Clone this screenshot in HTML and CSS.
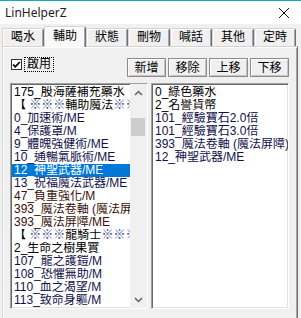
FILE: index.html
```html
<!DOCTYPE html>
<html lang="zh-Hant">
<head>
    <meta charset="UTF-8">
    <meta name="viewport" content="width=device-width, initial-scale=1.0">
    <title>LinHelperZ</title>
    <link rel="stylesheet" href="styles.css">
</head>
<body>
<div class="titlebar">
    <span class="title">LinHelperZ</span>
    <svg class="close" width="10" height="10" viewBox="0 0 10 10">
        <path d="M0 0L10 10M10 0L0 10" stroke="#111" stroke-width="1"/>
    </svg>
</div>

<div class="tabs">
    <div class="tab">喝水</div>
    <div class="tab active">輔助</div>
    <div class="tab">狀態</div>
    <div class="tab">刪物</div>
    <div class="tab">喊話</div>
    <div class="tab">其他</div>
    <div class="tab">定時</div>
</div>

<div class="panel">
    <div class="toprow">
        <div class="check">
            <svg width="11" height="11" viewBox="0 0 11 11">
                <rect x="0.5" y="0.5" width="10" height="10" fill="#fff" stroke="#333"/>
                <polyline points="2,5.5 4.3,7.8 8.8,3" fill="none" stroke="#000" stroke-width="1.7"/>
            </svg>
            <span class="checklabel">啟用</span>
        </div>
        <div class="buttons">
            <button class="btn">新增</button>
            <button class="btn">移除</button>
            <button class="btn">上移</button>
            <button class="btn">下移</button>
        </div>
    </div>

    <div class="lists">
        <div class="list">
            <div class="items">
                <div class="item">175_殷海薩補充藥水</div>
                <div class="item">【 <span class="mark">※※※</span>輔助魔法<span class="mark">※※※</span></div>
                <div class="item navy">0_加速術/ME</div>
                <div class="item navy">4_保護罩/M</div>
                <div class="item navy">9_體魄強健術/ME</div>
                <div class="item navy">10_通暢氣脈術/ME</div>
                <div class="item sel">12_神聖武器/ME</div>
                <div class="item navy">13_祝福魔法武器/ME</div>
                <div class="item brown">47_負重強化/M</div>
                <div class="item brown">393_魔法卷軸 (魔法屏障)/ME</div>
                <div class="item brown">393_魔法屏障/ME</div>
                <div class="item">【 <span class="mark">※※※</span>龍騎士<span class="mark">※※※</span></div>
                <div class="item">2_生命之樹果實</div>
                <div class="item navy">107_龍之護鎧/M</div>
                <div class="item navy">108_恐懼無助/M</div>
                <div class="item navy">110_血之渴望/M</div>
                <div class="item navy">113_致命身軀/M</div>
            </div>
            <div class="scroll">
                <div class="arrow">
                    <svg width="9" height="6" viewBox="0 0 9 6"><polyline points="1,5 4.5,1.5 8,5" fill="none" stroke="#606060" stroke-width="1.5"/></svg>
                </div>
                <div class="track"><div class="thumb"></div></div>
                <div class="arrow">
                    <svg width="9" height="6" viewBox="0 0 9 6"><polyline points="1,1 4.5,4.5 8,1" fill="none" stroke="#606060" stroke-width="1.5"/></svg>
                </div>
            </div>
        </div>

        <div class="list">
            <div class="items">
                <div class="item">0_綠色藥水</div>
                <div class="item">2_名譽貨幣</div>
                <div class="item navy">101_經驗寶石2.0倍</div>
                <div class="item navy">101_經驗寶石3.0倍</div>
                <div class="item navy">393_魔法卷軸 (魔法屏障),</div>
                <div class="item navy">12_神聖武器/ME</div>
            </div>
        </div>
    </div>
</div>
</body>
</html>
```

FILE: styles.css
```css
* {
    box-sizing: border-box;
}
body {
    margin: 0;
    width: 301px;
    height: 318px;
    overflow: hidden;
    background: #f0f0f0;
    font-family: "Liberation Sans", "Noto Sans CJK TC", sans-serif;
    font-size: 12px;
    color: #000;
}
.titlebar {
    height: 24px;
    background: #fff;
    border-top: 1px solid #19a9c0;
    display: flex;
    align-items: center;
    justify-content: space-between;
    padding: 0 12px 0 5px;
}
.title {
    font-family: "Noto Sans", sans-serif;
    font-size: 12px;
    color: #2a1818;
}
.tabs {
    display: flex;
    align-items: flex-end;
    height: 20px;
    margin-top: 2px;
    padding-left: 2px;
    position: relative;
    z-index: 1;
}
.tab {
    width: 42px;
    height: 18px;
    border-top: 1px solid #d4d4d4;
    border-left: 1px solid #d4d4d4;
    border-right: 1px solid #6f6f6f;
    box-shadow: inset 1px 1px #fff, inset -1px 0 #a8a8a8;
    border-radius: 2px 2px 0 0;
    text-align: center;
    line-height: 17px;
    font-size: 12px;
}
.tab.active {
    height: 21px;
    margin-bottom: -1px;
    background: #fafafa;
    line-height: 19px;
}
.panel {
    height: 280px;
    margin: 0 3px 0 2px;
    border-top: 1px solid #d4d4d4;
    border-left: 1px solid #d4d4d4;
    border-right: 1px solid #6f6f6f;
    box-shadow: inset 1px 1px #fff, inset -1px 0 #a8a8a8;
    padding: 11px 8px 0 7px;
}
.toprow {
    display: flex;
    height: 19px;
}
.check {
    display: flex;
    align-items: center;
    gap: 2px;
    margin-left: 1px;
    margin-top: -1px;
    height: 15px;
}
.checklabel {
    border: 1px dotted #000;
    padding: 0 2px;
    line-height: 13px;
}
.buttons {
    display: flex;
    gap: 2px;
    margin-left: auto;
}
.btn {
    width: 39px;
    height: 19px;
    padding: 0;
    border: 1px solid #8c8c8c;
    box-shadow: inset 1px 1px #fff, inset -1px -1px #c4c4c4;
    background: #f0f0f0;
    font: inherit;
    line-height: 16px;
    color: #000;
}
.lists {
    display: flex;
    gap: 3px;
    margin-top: 6px;
}
.list {
    width: 138px;
    height: 226px;
    background: #fff;
    border: 1px solid;
    border-color: #a0a0a0 #fff #fff #a0a0a0;
    box-shadow: inset 1px 1px #696969, inset -1px -1px #e3e3e3;
    display: flex;
    overflow: hidden;
}
.items {
    flex: 1;
    min-width: 0;
    padding: 2px 0 0 1px;
    overflow: hidden;
}
.item {
    height: 13px;
    line-height: 13px;
    white-space: nowrap;
    padding-left: 2px;
    overflow: hidden;
}
.navy {
    color: #10104a;
}
.brown {
    color: #3a1208;
}
.mark {
    color: #34458c;
}
.item.sel {
    background: #0078d7;
    color: #fff;
}
.scroll {
    width: 17px;
    background: #f0f0f0;
    display: flex;
    flex-direction: column;
}
.arrow {
    height: 17px;
    display: flex;
    align-items: center;
    justify-content: center;
}
.track {
    flex: 1;
}
.thumb {
    height: 18px;
    margin: 17px 2px 0 1px;
    background: #cdcdcd;
}
```
